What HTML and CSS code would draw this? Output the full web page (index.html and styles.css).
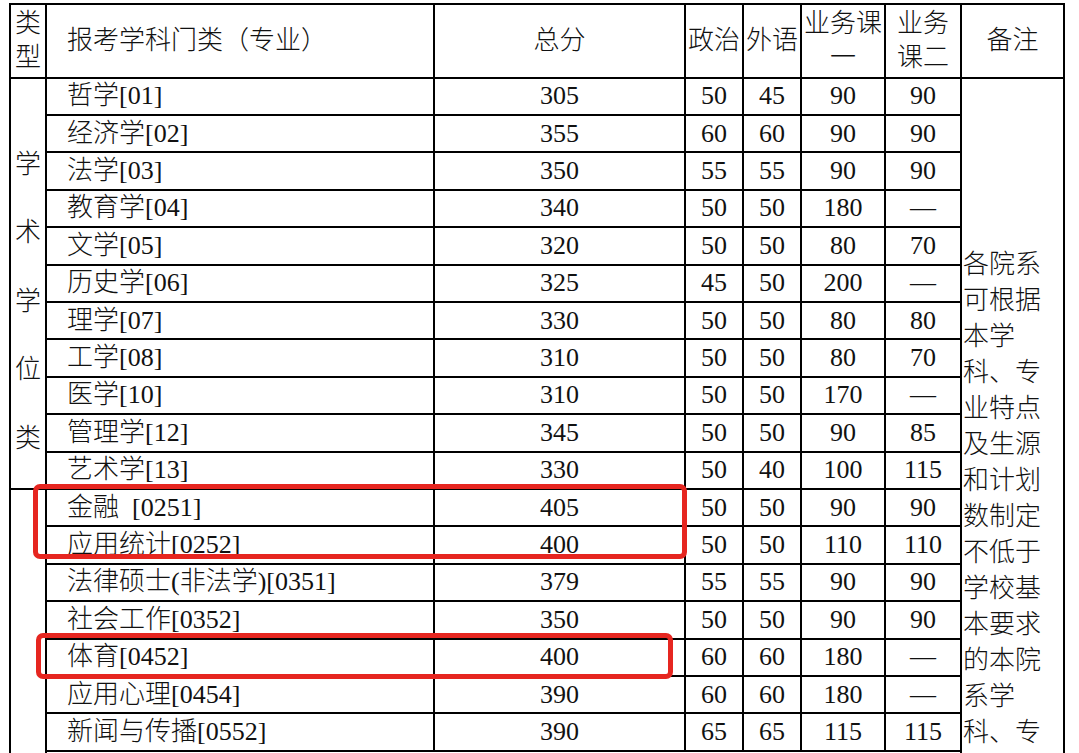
FILE: index.html
```html
<!DOCTYPE html>
<html lang="zh-CN">
<head>
<meta charset="utf-8">
<title>复试基本分数线</title>
<link rel="stylesheet" href="styles.css">
</head>
<body>
<div class="sheet">
  <table class="score-table">
    <colgroup>
      <col class="c-type">
      <col class="c-name">
      <col class="c-total">
      <col class="c-pol">
      <col class="c-lang">
      <col class="c-b1">
      <col class="c-b2">
      <col class="c-note">
    </colgroup>
    <thead>
      <tr class="head-row">
        <th>类型</th>
        <th class="name">报考学科门类（专业）</th>
        <th>总分</th>
        <th>政治</th>
        <th>外语</th>
        <th>业务课一</th>
        <th>业务课二</th>
        <th>备注</th>
      </tr>
    </thead>
    <tbody>
      <tr><td class="group" rowspan="11">学术学位类</td><td class="name">哲学[01]</td><td>305</td><td>50</td><td>45</td><td>90</td><td>90</td>
        <td class="note" rowspan="19">各院系可根据本学科、专业特点及生源和计划数制定不低于学校基本要求的本院系学科、专业</td></tr>
      <tr><td class="name">经济学[02]</td><td>355</td><td>60</td><td>60</td><td>90</td><td>90</td></tr>
      <tr><td class="name">法学[03]</td><td>350</td><td>55</td><td>55</td><td>90</td><td>90</td></tr>
      <tr><td class="name">教育学[04]</td><td>340</td><td>50</td><td>50</td><td>180</td><td>—</td></tr>
      <tr><td class="name">文学[05]</td><td>320</td><td>50</td><td>50</td><td>80</td><td>70</td></tr>
      <tr><td class="name">历史学[06]</td><td>325</td><td>45</td><td>50</td><td>200</td><td>—</td></tr>
      <tr><td class="name">理学[07]</td><td>330</td><td>50</td><td>50</td><td>80</td><td>80</td></tr>
      <tr><td class="name">工学[08]</td><td>310</td><td>50</td><td>50</td><td>80</td><td>70</td></tr>
      <tr><td class="name">医学[10]</td><td>310</td><td>50</td><td>50</td><td>170</td><td>—</td></tr>
      <tr><td class="name">管理学[12]</td><td>345</td><td>50</td><td>50</td><td>90</td><td>85</td></tr>
      <tr><td class="name">艺术学[13]</td><td>330</td><td>50</td><td>40</td><td>100</td><td>115</td></tr>
      <tr><td class="group group-pro" rowspan="8">专业学位类</td><td class="name">金融&nbsp; [0251]</td><td>405</td><td>50</td><td>50</td><td>90</td><td>90</td></tr>
      <tr><td class="name">应用统计[0252]</td><td>400</td><td>50</td><td>50</td><td>110</td><td>110</td></tr>
      <tr><td class="name">法律硕士(非法学)[0351]</td><td>379</td><td>55</td><td>55</td><td>90</td><td>90</td></tr>
      <tr><td class="name">社会工作[0352]</td><td>350</td><td>50</td><td>50</td><td>90</td><td>90</td></tr>
      <tr><td class="name">体育[0452]</td><td>400</td><td>60</td><td>60</td><td>180</td><td>—</td></tr>
      <tr><td class="name">应用心理[0454]</td><td>390</td><td>60</td><td>60</td><td>180</td><td>—</td></tr>
      <tr><td class="name">新闻与传播[0552]</td><td>390</td><td>65</td><td>65</td><td>115</td><td>115</td></tr>
      <tr class="filler"><td colspan="6"></td></tr>
    </tbody>
  </table>
  <div class="mark mark-a"></div>
  <div class="mark mark-b"></div>
</div>
</body>
</html>
```
FILE: styles.css
```css
html, body {
  margin: 0;
  padding: 0;
  background: #fff;
}

.sheet {
  position: relative;
  height: 753px;
  overflow: hidden;
  padding: 3px 0 0 9px;
  box-sizing: border-box;
}

.score-table {
  border-collapse: collapse;
  table-layout: fixed;
  width: 1054px;
  font-family: "Liberation Serif", "Noto Sans CJK SC", serif;
  font-size: 26px;
  font-weight: 300;
  color: #111;
}

.c-type { width: 36px; }
.c-name { width: 388px; }
.c-total { width: 251px; }
.c-pol { width: 58px; }
.c-lang { width: 58px; }
.c-b1 { width: 84px; }
.c-b2 { width: 76px; }
.c-note { width: 103px; }

.score-table th,
.score-table td {
  border: 2px solid #000;
  padding: 0;
  text-align: center;
  vertical-align: middle;
  font-weight: 300;
  line-height: 30px;
}

.head-row {
  height: 73.5px;
}

.head-row th {
  line-height: 34px;
}

.score-table tbody tr {
  height: 37.42px;
}

.score-table .name {
  text-align: left;
  padding-left: 20px;
  white-space: nowrap;
}

.score-table .group {
  vertical-align: top;
  padding-top: 52px;
  line-height: 68.5px;
}

.score-table .group-pro {
  vertical-align: middle;
  padding-top: 0;
}

.score-table .note {
  vertical-align: top;
  text-align: left;
  padding: 168px 0 0 1px;
  line-height: 36px;
}

.score-table tbody tr.filler {
  height: 1400px;
}

.mark {
  position: absolute;
  border: 5px solid #e62620;
  border-radius: 7px;
  box-sizing: border-box;
}

.mark-a {
  left: 33px;
  top: 484px;
  width: 654px;
  height: 75px;
}

.mark-b {
  left: 36px;
  top: 633px;
  width: 637px;
  height: 46px;
}
```
